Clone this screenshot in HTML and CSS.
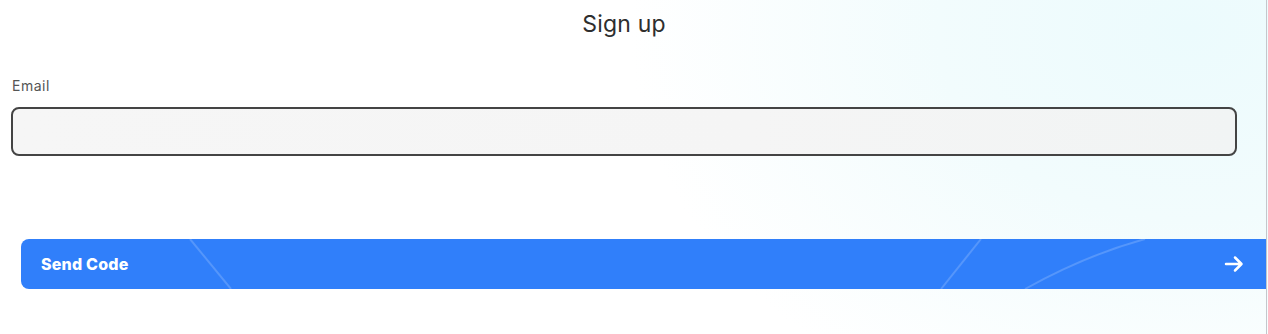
FILE: index.html
```html
<!DOCTYPE html>
<html lang="en">
<head>
<meta charset="utf-8">
<title>Sign up</title>
<link rel="stylesheet" href="styles.css">
</head>
<body>
<div class="frame">
  <h1 class="title">Sign up</h1>
  <form class="form">
    <label class="label" for="email">Email</label>
    <input class="input" id="email" type="email">
    <button class="send" type="button">
      <svg class="deco" viewBox="0 0 1245 50" preserveAspectRatio="none" aria-hidden="true">
        <path d="M169 0 L210 50" />
        <path d="M960 0 L920 50" />
        <path d="M1124 0 C1080 12 1040 30 1004 50" />
      </svg>
      <span class="send-text">Send Code</span>
      <svg class="arrow" viewBox="0 0 20 20" aria-hidden="true">
        <path d="M2 10 H17 M11 3.5 L17.5 10 L11 16.5" />
      </svg>
    </button>
  </form>
</div>
</body>
</html>
```

FILE: styles.css
```css
html, body {
  margin: 0;
  padding: 0;
}
body {
  width: 1268px;
  height: 334px;
  overflow: hidden;
  font-family: Inter, "Open Sans", "Liberation Sans", sans-serif;
  background:
    radial-gradient(ellipse 560px 420px at 1190px 30px, #ecfbfd 0%, #f2fcfd 45%, rgba(255,255,255,0) 100%),
    #ffffff;
}
.frame {
  width: 1266px;
  height: 334px;
  border-right: 1px solid #c4c7cc;
  display: flex;
  flex-direction: column;
}
.title {
  margin: 0;
  padding: 10px 18px 0 0;
  text-align: center;
  font-size: 23px;
  font-weight: 400;
  color: #2e2e2e;
  letter-spacing: 0.2px;
  line-height: 28px;
}
.form {
  display: flex;
  flex-direction: column;
  padding: 0 29px 0 11px;
  margin-top: 40px;
}
.label {
  font-size: 14px;
  color: #555555;
  padding-left: 1px;
  line-height: 16px;
  letter-spacing: 0.5px;
}
.input {
  margin-top: 13px;
  height: 49px;
  box-sizing: border-box;
  border: 2px solid #444444;
  border-radius: 8px;
  background: linear-gradient(90deg, #f6f6f6 0%, #f5f5f5 60%, #f1f4f4 100%);
  outline: none;
  font: inherit;
}
.send {
  position: relative;
  margin: 83px -29px 0 10px;
  height: 50px;
  border: none;
  border-radius: 8px 0 0 8px;
  background: #307ffa;
  color: #ffffff;
  display: flex;
  align-items: center;
  justify-content: space-between;
  padding: 0 22px 0 20px;
  font: inherit;
  overflow: hidden;
  cursor: pointer;
}
.deco {
  position: absolute;
  left: 0;
  top: 0;
  width: 100%;
  height: 100%;
  fill: none;
  stroke: rgba(255,255,255,0.18);
  stroke-width: 2;
}
.send-text {
  position: relative;
  font-size: 16px;
  font-weight: 800;
  letter-spacing: 0.2px;
}
.arrow {
  position: relative;
  width: 20px;
  height: 20px;
  fill: none;
  stroke: #ffffff;
  stroke-width: 2.5;
  stroke-linecap: round;
  stroke-linejoin: round;
}
```
